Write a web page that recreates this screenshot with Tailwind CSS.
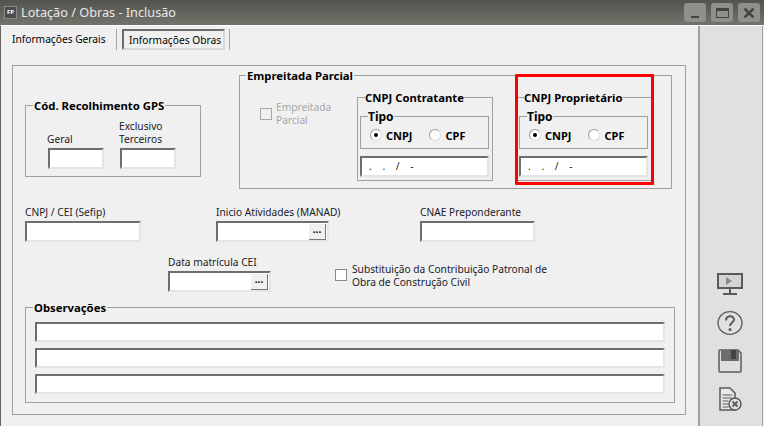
<!DOCTYPE html>
<html lang="pt-BR">
<head>
    <meta charset="UTF-8">
    <meta name="viewport" content="width=device-width, initial-scale=1.0">
    <title>Lotação / Obras - Inclusão</title>
    <script src="https://cdn.jsdelivr.net/npm/@tailwindcss/browser@4"></script>
</head>
<body class="w-[764px] h-[426px] overflow-hidden bg-[#f0f0f0] font-['Noto_Sans',sans-serif] text-[10.2px] leading-[13px] text-[#1a1a2a]">
    <!-- Title bar -->
    <header class="h-[25px] flex items-center bg-gradient-to-b from-[#54544e] to-[#73736c] pl-[4px] pr-[4px]">
        <div class="w-[13px] h-[13px] bg-[#4c4c4c] border border-[#8a8a8a] flex items-center justify-center text-[6px] font-bold text-white">FP</div>
        <h1 class="ml-[4px] text-[12.7px] text-[#e8e8e8]">Lotação / Obras - Inclusão</h1>
        <div class="ml-auto flex gap-[5px]">
            <button class="w-[22px] h-[19px] rounded-[3px] bg-[#8f8f8b] flex items-end justify-center pb-[4px]"><span class="w-[8px] h-[2px] bg-[#444]"></span></button>
            <button class="w-[22px] h-[19px] rounded-[3px] bg-[#8f8f8b] flex items-center justify-center"><span class="w-[13px] h-[10px] border border-[#444] border-t-[3px]"></span></button>
            <button class="w-[22px] h-[19px] rounded-[3px] bg-[#8f8f8b] flex items-center justify-center">
                <svg width="12" height="10" viewBox="0 0 12 10"><path d="M1.5 .5 10.5 9.5M10.5 .5 1.5 9.5" stroke="#444" stroke-width="2.6"/></svg>
            </button>
        </div>
    </header>

    <div class="flex h-[401px] border-l border-t border-t-white border-l-[#666]">
        <main class="w-[699px] border-r-2 border-[#a0a0a0]">
            <!-- Tabs -->
            <nav class="h-[39px] flex items-start pt-[3px] pl-[11px]">
                <span class="w-[105px] h-[21px] border-r border-[#a8a8a8] pt-[4px] text-black whitespace-nowrap">Informações Gerais</span>
                <span class="ml-[5px] w-[103px] h-[21px] border-2 border-[#6b6b6b] border-r-[#d8d8d8] border-b-[#d8d8d8] pl-[5px] pt-[3px] text-black whitespace-nowrap">Informações Obras</span>
                <span class="ml-[4px] w-px h-[21px] bg-[#a8a8a8]"></span>
            </nav>

            <section class="ml-[11px] w-[674px] h-[350px] border border-[#a0a0a0]">
                <!-- Row 1 -->
                <div class="flex items-start pl-[12px] pt-[9px]">
                    <div class="relative mt-[30px] w-[176px] h-[72px] border border-[#a0a0a0] flex items-end gap-[16px] pl-[22px] pb-[7px]">
                        <span class="absolute -top-[7px] left-[7px] px-px bg-[#f0f0f0] font-bold text-[11.3px] text-black">Cód. Recolhimento GPS</span>
                        <div class="w-[56px]">
                            <label class="block -ml-[1px] mb-[2px]">Geral</label>
                            <div class="h-[21px] bg-white border-2 border-[#6e6e6e] border-r-[#e4e4e4] border-b-[#e4e4e4]"></div>
                        </div>
                        <div class="w-[56px]">
                            <label class="block -ml-[1px] mb-[2px]">Exclusivo Terceiros</label>
                            <div class="h-[21px] bg-white border-2 border-[#6e6e6e] border-r-[#e4e4e4] border-b-[#e4e4e4]"></div>
                        </div>
                    </div>

                    <div class="relative ml-[38px] w-[433px] h-[114px] border border-[#a0a0a0] flex items-start">
                        <span class="absolute -top-[7px] left-[6px] px-px bg-[#f0f0f0] font-bold text-[11.3px] text-black">Empreitada Parcial</span>
                        <div class="ml-[20px] mt-[32px] w-[97px] flex items-start text-[#a6a6a6]">
                            <span class="w-[12px] h-[12px] border border-[#a8a8a8] shrink-0"></span>
                            <span class="ml-[4px] -mt-[7px]">Empreitada Parcial</span>
                        </div>

                        <div class="relative mt-[21px] w-[136px] h-[84px] border border-[#a0a0a0] pl-[2px] pt-[18px]">
                            <span class="absolute -top-[7px] left-[7px] bg-[#f0f0f0] font-bold text-[11.3px] text-black">CNPJ Contratante</span>
                            <div class="relative w-[129px] h-[33px] border border-[#a0a0a0] flex items-center pl-[9px] pt-[5px] font-bold text-[11px] text-black">
                                <span class="absolute -top-[7px] left-[7px] bg-[#f0f0f0] text-[12px]">Tipo</span>
                                <span class="w-[12px] h-[12px] rounded-full border border-[#999] border-b-[#ddd] border-r-[#ddd] bg-white flex items-center justify-center"><span class="w-[4px] h-[4px] rounded-full bg-black"></span></span>
                                <span class="ml-[4px]">CNPJ</span>
                                <span class="ml-[17px] w-[12px] h-[12px] rounded-full border border-[#999] border-b-[#ddd] border-r-[#ddd] bg-white"></span>
                                <span class="ml-[4px]">CPF</span>
                            </div>
                            <div class="mt-[7px] w-[129px] h-[21px] bg-white border-2 border-[#6e6e6e] border-r-[#e4e4e4] border-b-[#e4e4e4] pl-[7px] pt-[2px] text-[#222] whitespace-pre [word-spacing:8px]">. . / -</div>
                        </div>

                        <div class="relative ml-[23px] mt-[21px] w-[136px] h-[84px] border border-[#a0a0a0] pl-[2px] pt-[18px]">
                            <span class="absolute -top-[7px] left-[7px] bg-[#f0f0f0] font-bold text-[11.3px] text-black">CNPJ Proprietário</span>
                            <div class="relative w-[129px] h-[33px] border border-[#a0a0a0] flex items-center pl-[9px] pt-[5px] font-bold text-[11px] text-black">
                                <span class="absolute -top-[7px] left-[7px] bg-[#f0f0f0] text-[12px]">Tipo</span>
                                <span class="w-[12px] h-[12px] rounded-full border border-[#999] border-b-[#ddd] border-r-[#ddd] bg-white flex items-center justify-center"><span class="w-[4px] h-[4px] rounded-full bg-black"></span></span>
                                <span class="ml-[4px]">CNPJ</span>
                                <span class="ml-[17px] w-[12px] h-[12px] rounded-full border border-[#999] border-b-[#ddd] border-r-[#ddd] bg-white"></span>
                                <span class="ml-[4px]">CPF</span>
                            </div>
                            <div class="mt-[7px] w-[129px] h-[21px] bg-white border-2 border-[#6e6e6e] border-r-[#e4e4e4] border-b-[#e4e4e4] pl-[7px] pt-[2px] text-[#222] whitespace-pre [word-spacing:8px]">. . / -</div>
                            <!-- highlight drawn over the screenshot -->
                            <span class="absolute -top-[24px] -left-[2px] w-[139px] h-[111px] border-[3px] border-[#ff0000] rounded-[1px]"></span>
                        </div>
                    </div>
                </div>

                <!-- Row 2 -->
                <div class="flex items-end pl-[12px] mt-[17px]">
                    <div class="w-[116px]">
                        <label class="block mb-[2px]">CNPJ / CEI (Sefip)</label>
                        <div class="h-[21px] bg-white border-2 border-[#6e6e6e] border-r-[#e4e4e4] border-b-[#e4e4e4]"></div>
                    </div>
                    <div class="ml-[75px] w-[113px]">
                        <label class="block mb-[2px] whitespace-nowrap">Inicio Atividades (MANAD)</label>
                        <div class="h-[21px] bg-white border-2 border-[#6e6e6e] border-r-[#e4e4e4] border-b-[#e4e4e4] flex justify-end pr-px pt-px">
                            <span class="w-[17px] h-[16px] bg-[#f0f0f0] border-b border-r border-[#777] flex items-center justify-center pb-[5px] text-[10px] leading-[6px] font-bold text-black">...</span>
                        </div>
                    </div>
                    <div class="ml-[91px] w-[115px]">
                        <label class="block mb-[2px]">CNAE Preponderante</label>
                        <div class="h-[21px] bg-white border-2 border-[#6e6e6e] border-r-[#e4e4e4] border-b-[#e4e4e4]"></div>
                    </div>
                </div>

                <!-- Row 3 -->
                <div class="flex items-start pl-[155px] mt-[14px]">
                    <div class="w-[103px]">
                        <label class="block mb-[2px]">Data matrícula CEI</label>
                        <div class="h-[21px] bg-white border-2 border-[#6e6e6e] border-r-[#e4e4e4] border-b-[#e4e4e4] flex justify-end pr-px pt-px">
                            <span class="w-[17px] h-[16px] bg-[#f0f0f0] border-b border-r border-[#777] flex items-center justify-center pb-[5px] text-[10px] leading-[6px] font-bold text-black">...</span>
                        </div>
                    </div>
                    <div class="ml-[64px] mt-[7px] flex items-start">
                        <span class="w-[12px] h-[12px] border border-[#888] bg-white shrink-0 mt-[6px]"></span>
                        <span class="ml-[5px] w-[205px] leading-[13px]">Substituição da Contribuição Patronal de Obra de Construção Civil</span>
                    </div>
                </div>

                <!-- Observacoes -->
                <div class="relative ml-[12px] mt-[15px] w-[650px] h-[96px] border border-[#a0a0a0] flex flex-col gap-[6px] pl-[9px] pt-[14px]">
                    <span class="absolute -top-[7px] left-[7px] px-px bg-[#f0f0f0] font-bold text-[11.3px] text-black">Observações</span>
                    <div class="w-[630px] h-[20px] bg-white border-2 border-[#6e6e6e] border-r-[#e4e4e4] border-b-[#e4e4e4]"></div>
                    <div class="w-[630px] h-[20px] bg-white border-2 border-[#6e6e6e] border-r-[#e4e4e4] border-b-[#e4e4e4]"></div>
                    <div class="w-[630px] h-[20px] bg-white border-2 border-[#6e6e6e] border-r-[#e4e4e4] border-b-[#e4e4e4]"></div>
                </div>
            </section>
        </main>

        <!-- Right toolbar -->
        <aside class="w-[63px] bg-[#e0e0e0] border-r border-[#a0a0a0] flex flex-col items-center pt-[247px] pr-[2px]">
            <svg width="26" height="22" viewBox="0 0 26 22" fill="none"><rect x="1" y="1" width="24" height="14" fill="#d4d4d4" stroke="#5a5a5a" stroke-width="2"/><path d="M9 4v8l6-4z" fill="#8a8a8a"/><path d="M13 15v5M6 21h14" stroke="#5a5a5a" stroke-width="2"/></svg>
            <svg class="mt-[16px]" width="26" height="24" viewBox="0 0 26 24" fill="none"><ellipse cx="13" cy="12" rx="12" ry="11.300" stroke="#5a5a5a" stroke-width="1.300"/><path d="M9 9.500c0-5.500 8-5.500 8-1 0 3-4 3-4 6.500" stroke="#5a5a5a" stroke-width="2"/><circle cx="13" cy="18.500" r="1.500" fill="#5a5a5a"/></svg>
            <svg class="mt-[14px]" width="24" height="24" viewBox="0 0 24 24" fill="none"><path d="M2 1h18l3 3v18a1 1 0 0 1-1 1H2a1 1 0 0 1-1-1V2a1 1 0 0 1 1-1z" stroke="#5a5a5a" stroke-width="1.500"/><rect x="3" y="1" width="18" height="11" fill="#6c6c6c"/><rect x="13" y="1" width="5" height="9" fill="#444"/></svg>
            <svg class="mt-[14px]" width="23" height="24" viewBox="0 0 23 24" fill="none"><path d="M1 1h10l5 5v17H1z" fill="#e8e8e8" stroke="#5a5a5a" stroke-width="1.500"/><path d="M3.500 8h10M3.500 11h10M3.500 14h6M3.500 17h6M3.500 20h6" stroke="#5a5a5a"/><circle cx="16" cy="17" r="6" fill="#e0e0e0" stroke="#5a5a5a" stroke-width="1.500"/><path d="M13.500 14.500l5 5M18.500 14.500l-5 5" stroke="#5a5a5a" stroke-width="1.800"/></svg>
        </aside>
    </div>
</body>
</html>
